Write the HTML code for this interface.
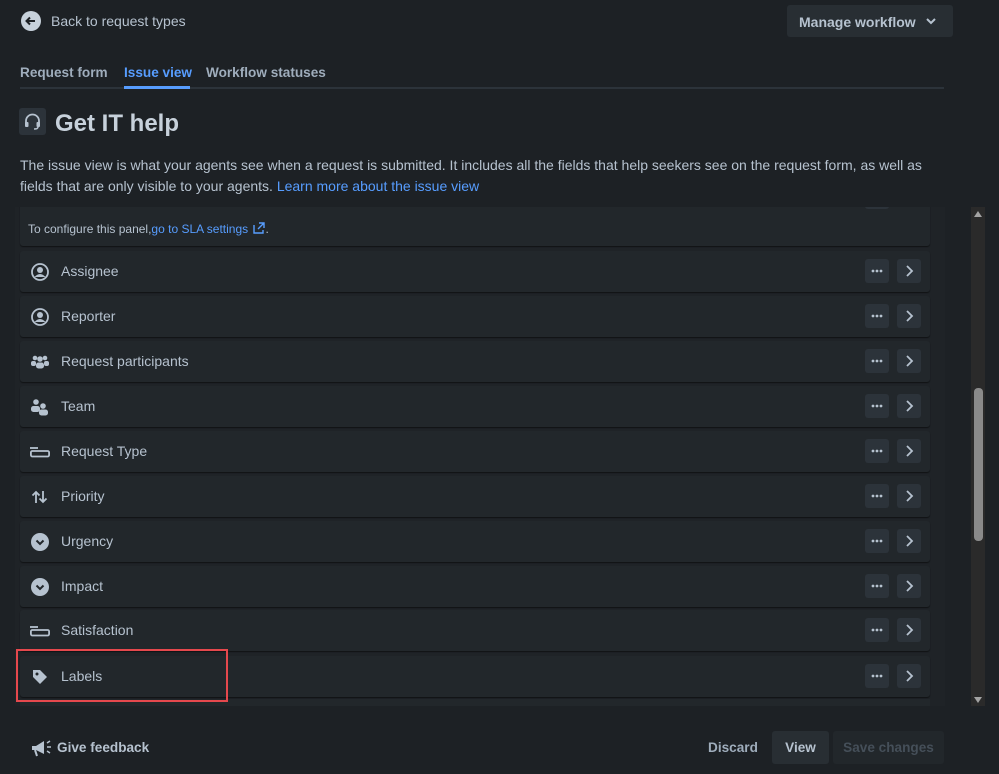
<!DOCTYPE html>
<html><head><style>
*{box-sizing:border-box;margin:0;padding:0}
body{width:999px;height:774px;background:#1d2125;font-family:"Liberation Sans",sans-serif;color:#b6c2cf;position:relative;overflow:hidden;font-size:14px}
.abs{position:absolute}
.row{position:absolute;left:20px;width:910px;height:41px;background:#22272b;border-radius:3px;box-shadow:0 1px 1px #101214}
.row .lbl{position:absolute;left:41px;top:12px;font-size:14px;color:#b6c2cf}
.row .ic{position:absolute;left:10px;top:11px;width:20px;height:20px}
.b{position:absolute;top:8px;width:24px;height:24px;background:#2c333a;border-radius:3px}
.b1{left:845px}
.b2{left:877px}
a{color:#579dff;text-decoration:none}
</style></head><body>
<svg width="0" height="0" style="position:absolute"><defs>
<g id="dots"><circle cx="8" cy="12" r="1.4" fill="#b6c2cf"/><circle cx="12" cy="12" r="1.4" fill="#b6c2cf"/><circle cx="16" cy="12" r="1.4" fill="#b6c2cf"/></g>
<g id="chev"><path d="M10 7l5 5-5 5" stroke="#b6c2cf" stroke-width="1.8" fill="none"/></g>
</defs></svg>
<svg class="abs" style="left:20px;top:10px" width="22" height="22"><circle cx="11" cy="11" r="10" fill="#c7d1db"/><path d="M15 11H7M10 7.5L6.5 11 10 14.5" stroke="#1d2125" stroke-width="2" fill="none"/></svg>
<div class="abs" style="left:51px;top:13px;font-size:14px;color:#b6c2cf">Back to request types</div>
<div class="abs" style="left:787px;top:5px;width:166px;height:32px;background:#282e33;border-radius:3px;font-weight:bold;color:#b6c2cf;padding:9px 0 0 12px">Manage workflow <svg style="position:absolute;left:138px;top:11px" width="12" height="10"><path d="M2 3l4 4 4-4" stroke="#b6c2cf" stroke-width="2" fill="none"/></svg></div>
<div class="abs" style="left:20px;top:65px;font-weight:bold;color:#9fadbc;font-size:13.6px">Request form</div>
<div class="abs" style="left:124px;top:65px;font-weight:bold;color:#579dff;font-size:13.6px">Issue view</div>
<div class="abs" style="left:206px;top:65px;font-weight:bold;color:#9fadbc;font-size:13.6px">Workflow statuses</div>
<div class="abs" style="left:20px;top:87px;width:924px;height:2px;background:#2c333a"></div>
<div class="abs" style="left:124px;top:86px;width:66px;height:3px;background:#579dff"></div>
<div class="abs" style="left:19px;top:108px;width:27px;height:27px;background:#2c333a;border-radius:3px"></div>
<svg class="abs" style="left:22px;top:111px" width="21" height="21" viewBox="0 0 21 21"><path d="M4 12V10a6.5 6.5 0 0 1 13 0v2" stroke="#b6c2cf" stroke-width="1.8" fill="none"/><rect x="3" y="11" width="3.5" height="5" rx="1" fill="#b6c2cf"/><rect x="14.5" y="11" width="3.5" height="5" rx="1" fill="#b6c2cf"/><path d="M16 16q0 2-4 2" stroke="#b6c2cf" stroke-width="1.5" fill="none"/></svg>
<div class="abs" style="left:55px;top:110px;font-size:24px;font-weight:bold;color:#c7d1db">Get IT help</div>
<div class="abs" style="left:20px;top:155px;width:930px;line-height:21px;font-size:14px;color:#b6c2cf">The issue view is what your agents see when a request is submitted. It includes all the fields that help seekers see on the request form, as well as fields that are only visible to your agents. <a>Learn more about the issue view</a></div>
<div class="abs" style="left:15px;top:207px;width:930px;height:499px;background:#1f2327;overflow:hidden">
<div class="row" style="left:5px;top:-6px;height:45px"><div class="abs" style="left:845px;top:0;width:24px;height:8px;background:#2c333a;border-radius:0 0 3px 3px"></div><div class="abs" style="left:8px;top:21px;font-size:12px;color:#b6c2cf">To configure this panel,<a>go to SLA settings</a> <svg width="14" height="12" style="vertical-align:-1px"><path d="M2 3v8h9V8M7 1h5v5M12 1L6 7" stroke="#579dff" stroke-width="1.4" fill="none"/></svg>.</div></div>
</div>
<div class="row" style="top:251px"><svg class="ic" viewBox="0 0 20 20"><circle cx="10" cy="10" r="8" fill="none" stroke="#b6c2cf" stroke-width="1.8"/><circle cx="10" cy="8" r="3" fill="#b6c2cf"/><path d="M4.5 15q5.5-6 11 0" fill="#b6c2cf"/></svg><div class="lbl">Assignee</div><svg class="b b1"><use href="#dots"/></svg><svg class="b b2"><use href="#chev"/></svg></div>
<div class="row" style="top:296px"><svg class="ic" viewBox="0 0 20 20"><circle cx="10" cy="10" r="8" fill="none" stroke="#b6c2cf" stroke-width="1.8"/><circle cx="10" cy="8" r="3" fill="#b6c2cf"/><path d="M4.5 15q5.5-6 11 0" fill="#b6c2cf"/></svg><div class="lbl">Reporter</div><svg class="b b1"><use href="#dots"/></svg><svg class="b b2"><use href="#chev"/></svg></div>
<div class="row" style="top:341px"><svg class="ic" viewBox="0 0 20 20"><circle cx="5" cy="6" r="2.3" fill="#b6c2cf"/><circle cx="15" cy="6" r="2.3" fill="#b6c2cf"/><circle cx="10" cy="7" r="2.8" fill="#b6c2cf"/><rect x="1" y="9" width="5" height="5" rx="2" fill="#b6c2cf"/><rect x="14" y="9" width="5" height="5" rx="2" fill="#b6c2cf"/><rect x="6" y="10.5" width="8" height="6" rx="2.5" fill="#b6c2cf"/></svg><div class="lbl">Request participants</div><svg class="b b1"><use href="#dots"/></svg><svg class="b b2"><use href="#chev"/></svg></div>
<div class="row" style="top:386px"><svg class="ic" viewBox="0 0 20 20"><circle cx="6" cy="5" r="2.8" fill="#b6c2cf"/><rect x="1" y="9" width="9" height="6" rx="2.5" fill="#b6c2cf"/><circle cx="13" cy="9" r="2.8" fill="#b6c2cf"/><rect x="9" y="12.5" width="9" height="6" rx="2.5" fill="#b6c2cf"/></svg><div class="lbl">Team</div><svg class="b b1"><use href="#dots"/></svg><svg class="b b2"><use href="#chev"/></svg></div>
<div class="row" style="top:431px"><svg class="ic" viewBox="0 0 20 20"><path d="M0 6h8" stroke="#b6c2cf" stroke-width="1.8"/><rect x="0.9" y="9" width="18.2" height="5.5" rx="1.5" fill="none" stroke="#b6c2cf" stroke-width="1.8"/></svg><div class="lbl">Request Type</div><svg class="b b1"><use href="#dots"/></svg><svg class="b b2"><use href="#chev"/></svg></div>
<div class="row" style="top:476px"><svg class="ic" viewBox="0 0 20 20"><path d="M6 16V5M2.5 8.5L6 5l3.5 3.5M13 4v11M9.5 11.5L13 15l3.5-3.5" stroke="#b6c2cf" stroke-width="1.8" fill="none"/></svg><div class="lbl">Priority</div><svg class="b b1"><use href="#dots"/></svg><svg class="b b2"><use href="#chev"/></svg></div>
<div class="row" style="top:521px"><svg class="ic" viewBox="0 0 20 20"><circle cx="10" cy="10" r="9" fill="#b6c2cf"/><path d="M6.5 8.5L10 12l3.5-3.5" stroke="#22272b" stroke-width="2" fill="none"/></svg><div class="lbl">Urgency</div><svg class="b b1"><use href="#dots"/></svg><svg class="b b2"><use href="#chev"/></svg></div>
<div class="row" style="top:566px"><svg class="ic" viewBox="0 0 20 20"><circle cx="10" cy="10" r="9" fill="#b6c2cf"/><path d="M6.5 8.5L10 12l3.5-3.5" stroke="#22272b" stroke-width="2" fill="none"/></svg><div class="lbl">Impact</div><svg class="b b1"><use href="#dots"/></svg><svg class="b b2"><use href="#chev"/></svg></div>
<div class="row" style="top:610px"><svg class="ic" viewBox="0 0 20 20"><path d="M0 6h8" stroke="#b6c2cf" stroke-width="1.8"/><rect x="0.9" y="9" width="18.2" height="5.5" rx="1.5" fill="none" stroke="#b6c2cf" stroke-width="1.8"/></svg><div class="lbl">Satisfaction</div><svg class="b b1"><use href="#dots"/></svg><svg class="b b2"><use href="#chev"/></svg></div>
<div class="row" style="top:656px"><svg class="ic" viewBox="0 0 20 20"><path d="M3 3h7l7 7-7 7-7-7z" fill="#b6c2cf"/><circle cx="7" cy="7" r="1.5" fill="#22272b"/></svg><div class="lbl">Labels</div><svg class="b b1"><use href="#dots"/></svg><svg class="b b2"><use href="#chev"/></svg></div>
<div class="abs" style="left:20px;top:699px;width:910px;height:7px;background:#22272b"></div>
<div class="abs" style="left:16px;top:649px;width:212px;height:53px;border:2px solid #e5484d"></div>
<div class="abs" style="left:971px;top:207px;width:14px;height:499px;background:#2a2a2a"></div>
<div class="abs" style="left:974px;top:388px;width:9px;height:153px;background:#8a8a8a;border-radius:4px"></div>
<div class="abs" style="left:974px;top:211px;width:0;height:0;border-left:4.5px solid transparent;border-right:4.5px solid transparent;border-bottom:6px solid #a3a3a3"></div>
<div class="abs" style="left:974px;top:697px;width:0;height:0;border-left:4.5px solid transparent;border-right:4.5px solid transparent;border-top:6px solid #a3a3a3"></div>
<svg class="abs" style="left:30px;top:737px" width="22" height="22" viewBox="0 0 22 22"><path d="M2 9h4l8-5v13l-8-4H2z" fill="#b6c2cf"/><path d="M5 13l2 6" stroke="#b6c2cf" stroke-width="2"/><path d="M17 6l3-2M17 10h4M17 14l3 2" stroke="#b6c2cf" stroke-width="1.5"/></svg>
<div class="abs" style="left:57px;top:740px;font-weight:bold;color:#b6c2cf;font-size:13.6px">Give feedback</div>
<div class="abs" style="left:708px;top:740px;font-weight:bold;color:#9fadbc;font-size:13.6px">Discard</div>
<div class="abs" style="left:772px;top:731px;width:57px;height:33px;background:#282e33;border-radius:3px;font-weight:bold;color:#b6c2cf;text-align:center;padding-top:9px;font-size:13.6px">View</div>
<div class="abs" style="left:833px;top:731px;width:111px;height:33px;background:#22272b;border-radius:3px;font-weight:bold;color:#454f59;text-align:center;padding-top:9px;font-size:13.6px">Save changes</div>
</body></html>
